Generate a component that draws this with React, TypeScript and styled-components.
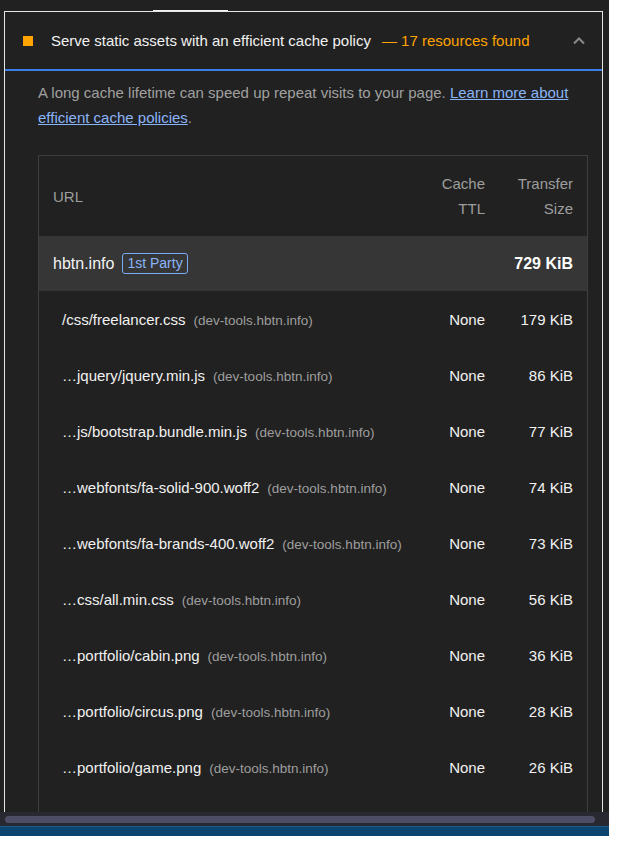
import React from 'react';
import styled, { createGlobalStyle } from 'styled-components';

const GlobalStyle = createGlobalStyle`
  html, body {
    margin: 0;
    padding: 0;
    background: #ffffff;
  }
  body {
    font-family: "Liberation Sans", Arial, sans-serif;
  }
`;

type Item = { path: string; host: string; ttl: string; size: string };

const items: Item[] = [
  { path: '/css/freelancer.css', host: '(dev-tools.hbtn.info)', ttl: 'None', size: '179 KiB' },
  { path: '…jquery/jquery.min.js', host: '(dev-tools.hbtn.info)', ttl: 'None', size: '86 KiB' },
  { path: '…js/bootstrap.bundle.min.js', host: '(dev-tools.hbtn.info)', ttl: 'None', size: '77 KiB' },
  { path: '…webfonts/fa-solid-900.woff2', host: '(dev-tools.hbtn.info)', ttl: 'None', size: '74 KiB' },
  { path: '…webfonts/fa-brands-400.woff2', host: '(dev-tools.hbtn.info)', ttl: 'None', size: '73 KiB' },
  { path: '…css/all.min.css', host: '(dev-tools.hbtn.info)', ttl: 'None', size: '56 KiB' },
  { path: '…portfolio/cabin.png', host: '(dev-tools.hbtn.info)', ttl: 'None', size: '36 KiB' },
  { path: '…portfolio/circus.png', host: '(dev-tools.hbtn.info)', ttl: 'None', size: '28 KiB' },
  { path: '…portfolio/game.png', host: '(dev-tools.hbtn.info)', ttl: 'None', size: '26 KiB' },
];

export default function App() {
  return (
    <>
      <GlobalStyle />
      <Frame>
        <TopStrip>
          <TabMarker />
        </TopStrip>
        <Viewport>
          <Panel>
            <AuditHeader>
              <Square />
              <Title>Serve static assets with an efficient cache policy</Title>
              <Display>— 17 resources found</Display>
              <Chevron width="14" height="14" viewBox="0 0 14 14">
                <polyline points="2,9.5 7,4.5 12,9.5" fill="none" stroke="#8a8a8a" strokeWidth="2" />
              </Chevron>
            </AuditHeader>
            <Body>
              <Description>
                A long cache lifetime can speed up repeat visits to your page.{' '}
                <Link href="#">Learn more about efficient cache policies</Link>.
              </Description>
              <Table>
                <HeadRow>
                  <HeadCell>URL</HeadCell>
                  <HeadCell $align="right">Cache<br />TTL</HeadCell>
                  <HeadCell $align="right">Transfer<br />Size</HeadCell>
                </HeadRow>
                <GroupRow>
                  <GroupName>
                    hbtn.info <Badge>1st Party</Badge>
                  </GroupName>
                  <span />
                  <GroupTotal>729 KiB</GroupTotal>
                </GroupRow>
                {items.map((it) => (
                  <ItemRow key={it.path}>
                    <UrlCell>
                      {it.path}
                      <Host>{it.host}</Host>
                    </UrlCell>
                    <ValueCell>{it.ttl}</ValueCell>
                    <ValueCell>{it.size}</ValueCell>
                  </ItemRow>
                ))}
                <EmptyRow />
              </Table>
            </Body>
          </Panel>
        </Viewport>
        <ScrollBar>
          <ScrollThumb />
        </ScrollBar>
        <StatusBar />
      </Frame>
    </>
  );
}

const Frame = styled.div`
  width: 609px;
  height: 836px;
  background: #212121;
  display: flex;
  flex-direction: column;
  overflow: hidden;
`;

const TopStrip = styled.div`
  height: 11px;
  flex: none;
  display: flex;
  align-items: flex-end;
`;

const TabMarker = styled.div`
  margin-left: 153px;
  width: 75px;
  height: 1px;
  background: #f2f2f2;
`;

const Viewport = styled.div`
  flex: 1;
  min-height: 0;
  overflow: hidden;
  padding: 0 6px 0 4px;
`;

const Panel = styled.div`
  border: 1px solid #e6e6e6;
  border-bottom: none;
  color: #e8eaed;
  font-size: 15px;
`;

const AuditHeader = styled.div`
  height: 57px;
  display: flex;
  align-items: center;
  padding: 0 16px 0 18px;
  border-bottom: 2px solid #3b7de9;
`;

const Square = styled.span`
  width: 10px;
  height: 10px;
  background: #ffa400;
  flex: none;
  margin-right: 18px;
`;

const Title = styled.span`
  font-size: 15px;
  color: #f1f1f1;
`;

const Display = styled.span`
  font-size: 15px;
  color: #ffa400;
  margin-left: 11px;
  flex: 1;
`;

const Chevron = styled.svg`
  flex: none;
`;

const Body = styled.div`
  padding: 9px 14px 0 33px;
`;

const Description = styled.div`
  color: #a0a0a0;
  line-height: 25px;
  font-size: 15px;
`;

const Link = styled.a`
  color: #8ab4f8;
  text-decoration: underline;
`;

const Table = styled.div`
  margin-top: 25px;
  border: 1px solid #3e3e3e;
`;

const Row = styled.div`
  display: grid;
  grid-template-columns: 1fr 80px 88px;
  align-items: center;
  padding: 0 14px 0 14px;
`;

const HeadRow = styled(Row)`
  height: 80px;
`;

const HeadCell = styled.div<{ $align?: 'left' | 'right' }>`
  color: #9e9e9e;
  line-height: 25px;
  text-align: ${(p) => p.$align || 'left'};
`;

const GroupRow = styled(Row)`
  height: 55px;
  background: #363636;
`;

const GroupName = styled.div`
  display: flex;
  align-items: center;
  gap: 8px;
  color: #f4f4f4;
  font-size: 16px;
`;

const Badge = styled.span`
  border: 1px solid #78aaf5;
  border-radius: 3px;
  color: #8ab4f8;
  font-size: 14px;
  padding: 1px 4px;
  line-height: 17px;
`;

const GroupTotal = styled.div`
  text-align: right;
  font-weight: bold;
  font-size: 16px;
  color: #ffffff;
`;

const ItemRow = styled(Row)`
  height: 56px;
  padding-left: 23px;
`;

const EmptyRow = styled(Row)`
  height: 56px;
`;

const UrlCell = styled.div`
  color: #f1f1f1;
  white-space: nowrap;
`;

const Host = styled.span`
  color: #9e9e9e;
  font-size: 13.5px;
  margin-left: 8px;
`;

const ValueCell = styled.div`
  text-align: right;
  color: #f1f1f1;
`;

const ScrollBar = styled.div`
  height: 14px;
  flex: none;
  background: #282830;
  display: flex;
  align-items: center;
  padding: 0 14px 0 5px;
`;

const ScrollThumb = styled.div`
  flex: 1;
  height: 7px;
  border-radius: 4px;
  background: #4e4d66;
`;

const StatusBar = styled.div`
  height: 9px;
  flex: none;
  background: #0b4570;
  border-top: 1px solid #1c5d8c;
`;
